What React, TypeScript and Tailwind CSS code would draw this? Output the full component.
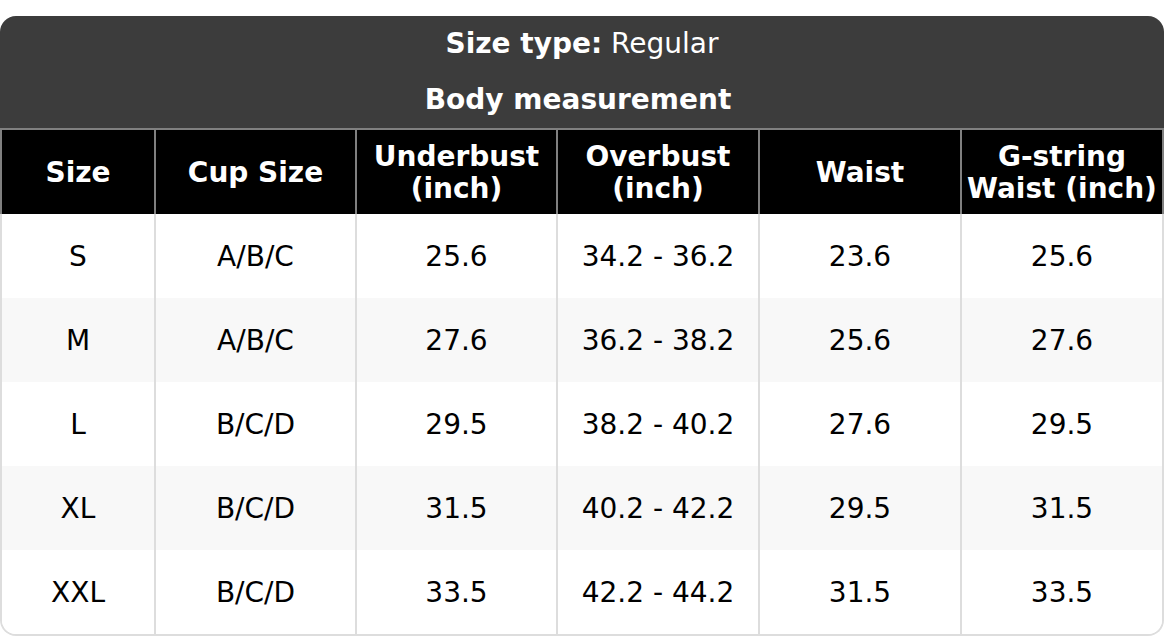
const columns = ["Size", "Cup Size", "Underbust\n(inch)", "Overbust\n(inch)", "Waist", "G-string\nWaist (inch)"];

const rows = [
  ["S", "A/B/C", "25.6", "34.2 - 36.2", "23.6", "25.6"],
  ["M", "A/B/C", "27.6", "36.2 - 38.2", "25.6", "27.6"],
  ["L", "B/C/D", "29.5", "38.2 - 40.2", "27.6", "29.5"],
  ["XL", "B/C/D", "31.5", "40.2 - 42.2", "29.5", "31.5"],
  ["XXL", "B/C/D", "33.5", "42.2 - 44.2", "31.5", "33.5"],
];

const gridCols = "grid grid-cols-[152px_201px_201px_202px_202px_202px]";

export default function App() {
  return (
    <div className="w-[1164px] h-[636px] bg-white pt-4 font-['DejaVu_Sans',sans-serif]">
      <div className="rounded-t-2xl overflow-hidden">
        <div className="bg-[#3c3c3c] text-white text-[28px] leading-8 text-center">
          <div className="h-14 flex items-center justify-center">
            <span className="font-bold">Size type:</span>
            <span className="whitespace-pre"> Regular</span>
          </div>
          <div className="h-14 flex items-center justify-center font-bold pr-2">Body measurement</div>
        </div>
        <div className={`${gridCols} bg-black border-t-2 border-x-2 border-[#808080]`}>
          {columns.map((c, i) => (
            <div
              key={c}
              className={
                i === 0
                  ? "h-[84px] pt-px flex items-center justify-center text-center text-white font-bold text-[28px] leading-8 whitespace-pre-line"
                  : "h-[84px] pt-px flex items-center justify-center text-center text-white font-bold text-[28px] leading-8 whitespace-pre-line border-l-2 border-[#808080]"
              }
            >
              {c}
            </div>
          ))}
        </div>
      </div>
      <div className="border-x-2 border-b-2 border-[#dddddd] rounded-b-2xl overflow-hidden">
        {rows.map((r, ri) => (
          <div key={r[0]} className={`${gridCols} ${ri % 2 === 1 ? "bg-[#f8f8f8]" : "bg-white"}`}>
            {r.map((v, i) => (
              <div
                key={i}
                className={
                  i === 0
                    ? "h-[84px] pt-0.5 flex items-center justify-center text-[28px] text-black"
                    : "h-[84px] pt-0.5 flex items-center justify-center text-[28px] text-black border-l-2 border-[#dddddd]"
                }
              >
                {v}
              </div>
            ))}
          </div>
        ))}
      </div>
    </div>
  );
}
